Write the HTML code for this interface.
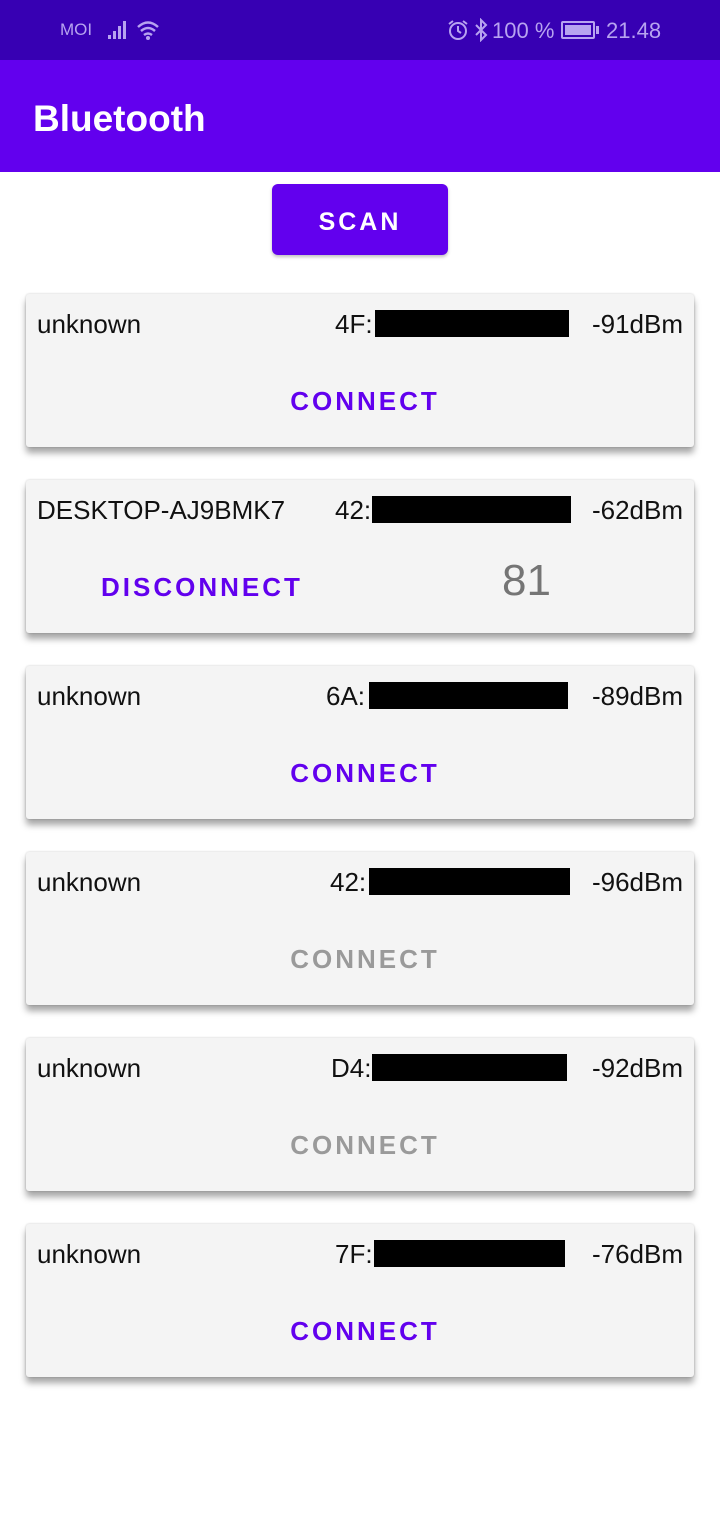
<!DOCTYPE html>
<html><head><meta charset="utf-8"><style>
*{margin:0;padding:0;box-sizing:border-box}
body{width:720px;height:1520px;background:#fff;font-family:"Liberation Sans",sans-serif;position:relative;overflow:hidden}
.sb{position:absolute;left:0;top:0;width:720px;height:60px;background:#3700b3;color:#b7a3f0;font-size:22px}
.ab{position:absolute;left:0;top:60px;width:720px;height:112px;background:#6200ee;color:#fff;font-size:37px;font-weight:bold;padding:38px 0 0 33px}
.scan{position:absolute;left:272px;top:184px;width:176px;height:71px;background:#6200ee;border-radius:6px;color:#fff;font-size:25px;font-weight:bold;letter-spacing:3px;text-align:center;line-height:76px;box-shadow:0 2px 3px rgba(0,0,0,.25)}
.card{position:absolute;left:26px;width:668px;height:153px;background:#f4f4f4;border-radius:3px;box-shadow:0 6px 7px rgba(0,0,0,.35),0 0 2px rgba(0,0,0,.2)}
.t{position:absolute;font-size:26px;color:#111;top:15px;white-space:nowrap}
.blk{position:absolute;background:#000;top:16px;height:27px}
.btn{position:absolute;top:92px;left:5px;width:100%;text-align:center;font-size:26px;font-weight:bold;letter-spacing:3px;color:#6200ee}
.dis{color:#9a9a9a}
</style></head><body>
<div class="sb">
<span style="position:absolute;left:60px;top:20px;font-size:17px">MOI</span>
<svg style="position:absolute;left:108px;top:20px" width="56" height="22"><rect x="0" y="15" width="3" height="4" fill="#b7a3f0"/><rect x="5" y="11" width="3" height="8" fill="#b7a3f0"/><rect x="10" y="6" width="3" height="13" fill="#b7a3f0"/><rect x="15" y="1" width="3" height="18" fill="#b7a3f0"/><path d="M30 7 Q40 -2 50 7 M33 11 Q40 5 47 11 M36 15 Q40 12 44 15" stroke="#b7a3f0" stroke-width="2.5" fill="none"/><circle cx="40" cy="18" r="2" fill="#b7a3f0"/></svg>
<svg style="position:absolute;left:447px;top:19px" width="22" height="22"><circle cx="11" cy="12" r="8" stroke="#b7a3f0" stroke-width="2" fill="none"/><path d="M11 7v5l3 2M2 5l4-3M20 5l-4-3" stroke="#b7a3f0" stroke-width="2" fill="none"/></svg>
<svg style="position:absolute;left:474px;top:18px" width="14" height="24"><path d="M2 7l10 10-5 5V2l5 5L2 17" stroke="#b7a3f0" stroke-width="2" fill="none"/></svg>
<span style="position:absolute;left:492px;top:18px">100 %</span>
<div style="position:absolute;left:561px;top:21px;width:34px;height:18px;border:2px solid #b7a3f0;border-radius:2px;padding:2px"><div style="background:#b7a3f0;width:100%;height:100%"></div></div>
<div style="position:absolute;left:596px;top:26px;width:3px;height:8px;background:#b7a3f0"></div>
<span style="position:absolute;left:606px;top:18px">21.48</span>
</div>
<div class="ab">Bluetooth</div>
<div class="scan">SCAN</div>

<div class="card" style="top:294px"><span class="t" style="left:11px">unknown</span><span class="t" style="left:309px">4F:</span><div class="blk" style="left:349px;width:194px"></div><span class="t" style="right:11px">-91dBm</span><div class="btn">CONNECT</div></div>

<div class="card" style="top:480px"><span class="t" style="left:11px">DESKTOP-AJ9BMK7</span><span class="t" style="left:309px">42:</span><div class="blk" style="left:346px;width:199px"></div><span class="t" style="right:11px">-62dBm</span><div class="btn" style="width:auto;left:75px;top:92px">DISCONNECT</div><span style="position:absolute;left:476px;top:76px;font-size:44px;color:#757575">81</span></div>

<div class="card" style="top:666px"><span class="t" style="left:11px">unknown</span><span class="t" style="left:300px">6A:</span><div class="blk" style="left:343px;width:199px"></div><span class="t" style="right:11px">-89dBm</span><div class="btn">CONNECT</div></div>

<div class="card" style="top:852px"><span class="t" style="left:11px">unknown</span><span class="t" style="left:304px">42:</span><div class="blk" style="left:343px;width:201px"></div><span class="t" style="right:11px">-96dBm</span><div class="btn dis">CONNECT</div></div>

<div class="card" style="top:1038px"><span class="t" style="left:11px">unknown</span><span class="t" style="left:305px">D4:</span><div class="blk" style="left:346px;width:195px"></div><span class="t" style="right:11px">-92dBm</span><div class="btn dis">CONNECT</div></div>

<div class="card" style="top:1224px"><span class="t" style="left:11px">unknown</span><span class="t" style="left:309px">7F:</span><div class="blk" style="left:348px;width:191px"></div><span class="t" style="right:11px">-76dBm</span><div class="btn">CONNECT</div></div>
</body></html>
